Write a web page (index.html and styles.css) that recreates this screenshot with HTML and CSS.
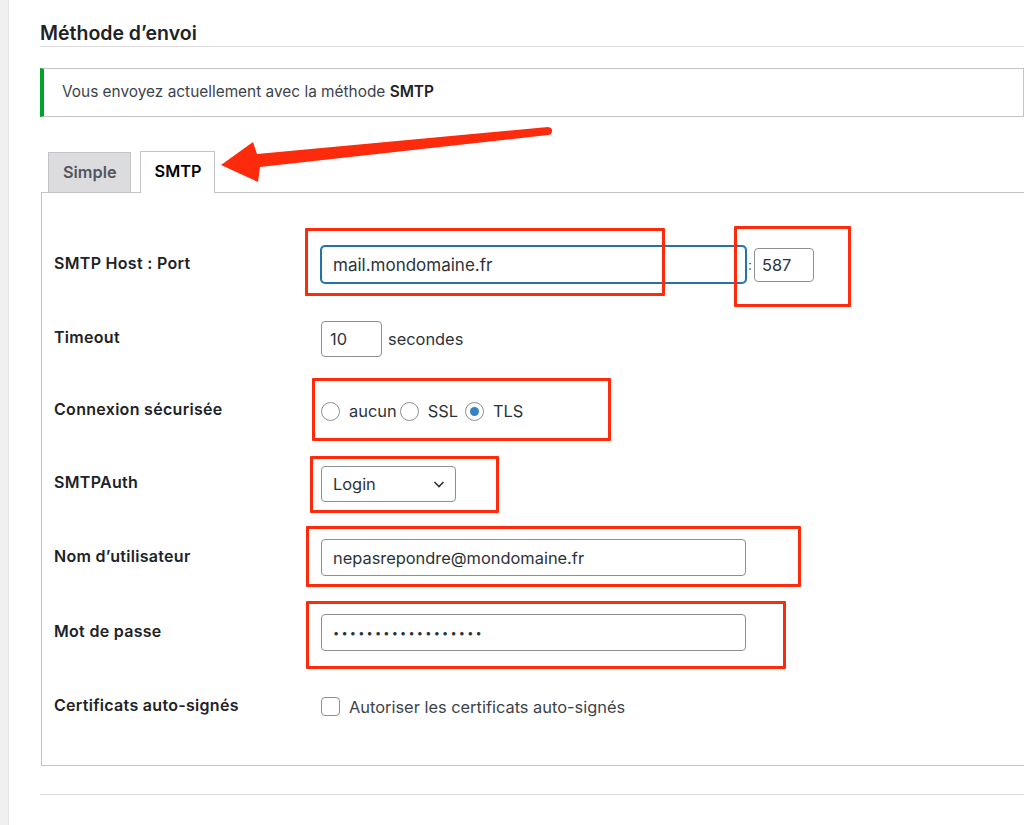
FILE: index.html
```html
<!DOCTYPE html>
<html lang="fr">
<head>
<meta charset="utf-8">
<title>Méthode d’envoi</title>
<link rel="stylesheet" href="styles.css">
</head>
<body>
<div class="wrap">
  <h2 class="title">Méthode d’envoi</h2>
  <div class="notice">Vous envoyez actuellement avec la méthode <strong>SMTP</strong></div>

  <div class="tabs">
    <span class="tab">Simple</span>
    <span class="tab active">SMTP</span>
  </div>

  <div class="panel">
    <div class="form">
      <div class="label">SMTP Host : Port</div>
      <div class="field">
        <input class="input host focus" type="text" value="mail.mondomaine.fr">
        <span class="colon">:</span>
        <input class="input port" type="text" value="587">
      </div>

      <div class="label">Timeout</div>
      <div class="field">
        <input class="input timeout" type="text" value="10">
        <span class="suffix">secondes</span>
      </div>

      <div class="label">Connexion sécurisée</div>
      <div class="field radios">
        <span class="radio"></span><span class="rlabel r1">aucun</span>
        <span class="radio"></span><span class="rlabel r2">SSL</span>
        <span class="radio checked"></span><span class="rlabel">TLS</span>
      </div>

      <div class="label">SMTPAuth</div>
      <div class="field">
        <div class="select">
          <span>Login</span>
          <svg class="chev" width="14" height="14" viewBox="0 0 14 14"><path d="M2.5 5 L7 9.5 L11.5 5" fill="none" stroke="#2c3338" stroke-width="1.6"/></svg>
        </div>
      </div>

      <div class="label">Nom d’utilisateur</div>
      <div class="field">
        <input class="input wide" type="text" value="nepasrepondre@mondomaine.fr">
      </div>

      <div class="label">Mot de passe</div>
      <div class="field">
        <div class="input wide pass">••••••••••••••••••</div>
      </div>

      <div class="label">Certificats auto-signés</div>
      <div class="field">
        <span class="checkbox"></span>
        <span class="clabel">Autoriser les certificats auto-signés</span>
      </div>
    </div>
  </div>

  <div class="sep"></div>

  <div class="mark m1"></div>
  <div class="mark m2"></div>
  <div class="mark m3"></div>
  <div class="mark m4"></div>
  <div class="mark m5"></div>
  <div class="mark m6"></div>
  <svg class="arrow" width="1024" height="825" viewBox="0 0 1024 825">
    <path d="M221 165 L253 142 L257 154 L548 127 Q553 128 552 132 Q551 135 548 135 L260 167 L258 182 Z" fill="#fe2a0c"/>
  </svg>
</div>
</body>
</html>
```

FILE: styles.css
```css
* { box-sizing: border-box; }
html, body { margin: 0; padding: 0; }
body {
  background: #f0f0f1;
  font-family: Inter, "Noto Sans", "Liberation Sans", sans-serif;
  color: #1d2327;
  width: 1024px;
  height: 825px;
  overflow: hidden;
}
.wrap {
  position: relative;
  margin-left: 8px;
  border-left: 1px solid #e3e3e4;
  background: #fff;
  height: 825px;
  padding: 1px 0 0 31px;
  overflow: hidden;
}
.title {
  margin: 0;
  padding: 20px 0 1px;
  font-size: 19.5px;
  line-height: 24px;
  font-weight: 600;
  color: #1d2327;
  border-bottom: 1px solid #dcdcde;
}
.notice {
  margin-top: 21px;
  height: 49px;
  border: 1px solid #c3c4c7;
  border-left: 4px solid #00a32a;
  padding: 0 18px;
  font-size: 15.4px;
  line-height: 46px;
  color: #3c434a;
}
.notice strong { color: #1d2327; font-weight: 600; }

.tabs {
  display: flex;
  gap: 9px;
  margin-top: 34px;
  padding-left: 8px;
  align-items: flex-end;
}
.tab {
  height: 40px;
  padding: 0 13px 0 14px;
  border: 1px solid #c3c4c7;
  border-bottom: none;
  background: #dcdcde;
  color: #50575e;
  font-size: 16.3px;
  font-weight: 600;
  line-height: 39px;
}
.tab.active {
  background: #fff;
  color: #000;
  height: 42px;
  margin-bottom: -1px;
  position: relative;
}

.panel {
  margin-left: 1px;
  border: 1px solid #c3c4c7;
  border-right: none;
  padding: 34px 0 22px 12px;
}
.form {
  display: grid;
  grid-template-columns: 267px 1fr;
  grid-template-rows: 75px 73px 72px 73px 75px 75px 73px;
}
.label, .field { display: flex; align-items: center; }
.label {
  font-size: 16px;
  letter-spacing: 0.3px;
  font-weight: 600;
  color: #1d2327;
  padding-bottom: 4px;
}
.field { font-size: 16.4px; color: #2c3338; }

.input {
  font-family: inherit;
  font-size: 16.4px;
  color: #2c3338;
  border: 1px solid #8c8f94;
  border-radius: 4px;
  background: #fff;
  padding: 0 11px;
  height: 36px;
  outline: none;
}
.host { width: 425px; height: 37px; font-size: 17px; }
.focus { border-color: #2271b1; box-shadow: 0 0 0 1px #2271b1; }
.colon { width: 8px; text-align: center; font-size: 14px; color: #50575e; }
.port { width: 60px; height: 34px; padding: 0 7px; }
.timeout { width: 61px; padding: 0 8px; }
.suffix { margin-left: 6px; }
.wide { width: 425px; height: 37px; }
.pass {
  display: flex;
  align-items: center;
  font-size: 11px;
  letter-spacing: 2.2px;
  color: #2c3338;
}

.radio {
  width: 19px; height: 19px;
  border: 1px solid #8c8f94;
  border-radius: 50%;
  display: inline-flex;
  align-items: center;
  justify-content: center;
  flex: none;
}
.radio.checked::after {
  content: "";
  width: 9px; height: 9px;
  border-radius: 50%;
  background: #3582c4;
}
.rlabel { margin-left: 9px; }
.r1 { margin-right: 3px; }
.r2 { margin-right: 7px; }

.select {
  width: 135px;
  height: 36px;
  border: 1px solid #8c8f94;
  border-radius: 4px;
  display: flex;
  align-items: center;
  justify-content: space-between;
  padding: 0 9px 0 11px;
  color: #2c3338;
}
.chev { display: block; }

.checkbox {
  width: 19px; height: 19px;
  border: 1px solid #8c8f94;
  border-radius: 4px;
  flex: none;
}
.clabel { margin-left: 9px; color: #3c434a; }

.sep {
  margin-top: 28px;
  border-top: 1px solid #dcdcde;
}

.mark {
  position: absolute;
  border: 3px solid #fe2a0c;
  border-radius: 1px;
}
/* coordinates are page x minus 9 (wrap offset) */
.m1 { left: 296px; top: 228px; width: 360px; height: 68px; }
.m2 { left: 725px; top: 226px; width: 117px; height: 81px; }
.m3 { left: 303px; top: 378px; width: 299px; height: 63px; }
.m4 { left: 301px; top: 456px; width: 189px; height: 57px; }
.m5 { left: 297px; top: 526px; width: 495px; height: 61px; }
.m6 { left: 297px; top: 601px; width: 480px; height: 68px; }
.arrow { position: absolute; left: -9px; top: 0; pointer-events: none; }
```
